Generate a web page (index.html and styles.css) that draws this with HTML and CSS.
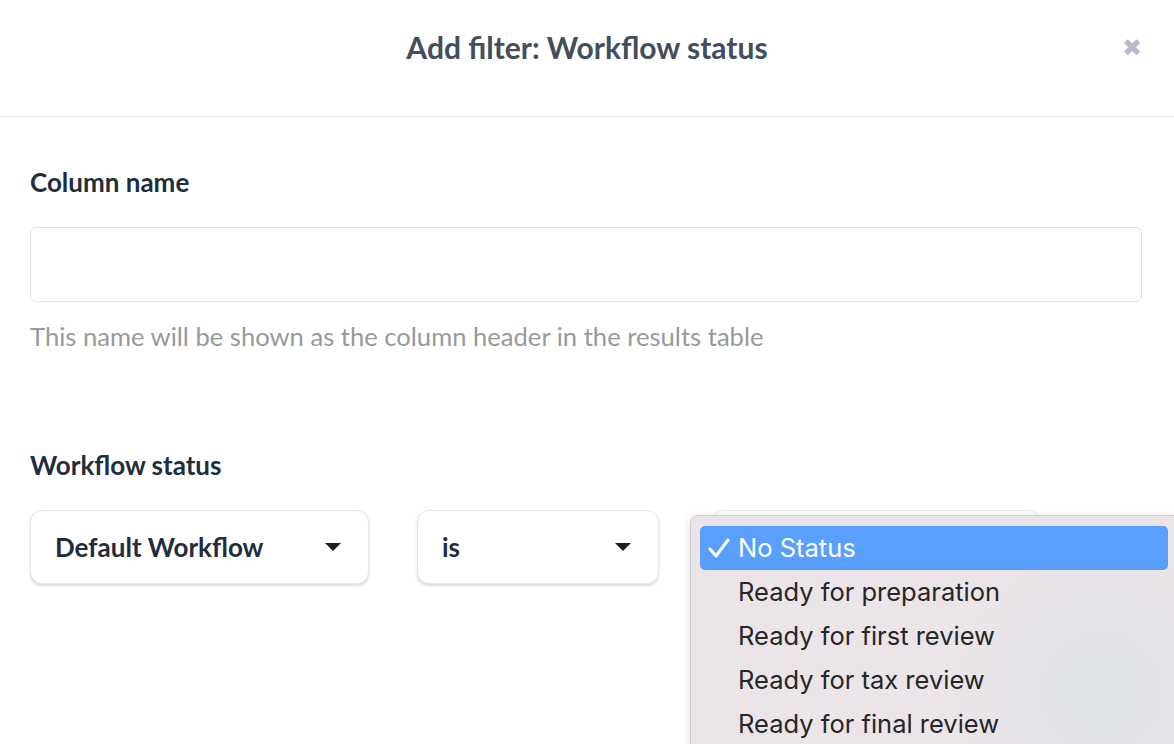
FILE: index.html
```html
<html>
    <head>
        <meta charset="UTF-8">
        <link rel="stylesheet" href="styles.css">
    </head>
    <body>
        <div class="modal">
            <div class="modal-header">
                <h1>Add filter: Workflow status</h1>
                <span class="close">&#x2716;</span>
            </div>
            <div class="modal-body">
                <div class="field">
                    <label for="colname">Column name</label>
                    <input type="text" id="colname" />
                    <p class="help">This name will be shown as the column header in the results table</p>
                </div>
                <div class="field">
                    <label>Workflow status</label>
                    <div class="selects">
                        <div class="select select-workflow">
                            <span>Default Workflow</span>
                            <span class="caret"></span>
                        </div>
                        <div class="select select-op">
                            <span>is</span>
                            <span class="caret"></span>
                        </div>
                        <div class="select-wrap">
                            <div class="select select-status">
                                <span class="caret"></span>
                            </div>
                            <ul class="menu">
                                <li class="selected">
                                    <svg class="check" width="22" height="20" viewBox="0 0 22 20"><path d="M2 11 L8 18 L20 2" fill="none" stroke="#fff" stroke-width="3" stroke-linecap="round" stroke-linejoin="round"/></svg>No Status
                                </li>
                                <li>Ready for preparation</li>
                                <li>Ready for first review</li>
                                <li>Ready for tax review</li>
                                <li>Ready for final review</li>
                            </ul>
                        </div>
                    </div>
                </div>
            </div>
        </div>
    </body>
</html>
```

FILE: styles.css
```css
html, body {
    margin: 0;
    padding: 0;
    background: #fff;
    overflow: hidden;
}

body {
    font-family: Lato, "Liberation Sans", sans-serif;
    color: #212d3d;
}

.modal-header {
    height: 117px;
    border-bottom: 1px solid #ececec;
    display: flex;
    align-items: center;
    justify-content: center;
    position: relative;
    box-sizing: border-box;
    padding-bottom: 22px;
}

.modal-header h1 {
    margin: 0;
    font-size: 30px;
    line-height: 36px;
    font-weight: 700;
    color: #434e5c;
}

.close {
    position: absolute;
    right: 32px;
    top: 33px;
    font-size: 24px;
    line-height: 28px;
    color: #b3bbc6;
}

.modal-body {
    padding: 50px 32px 0 30px;
}

.field {
    margin-bottom: 99px;
}

.field label {
    display: block;
    font-size: 26px;
    line-height: 30px;
    font-weight: 700;
    margin-bottom: 30px;
}

.field input {
    display: block;
    width: 100%;
    height: 75px;
    box-sizing: border-box;
    border: 1px solid #e3e3e3;
    border-radius: 6px;
    font-size: 26px;
    padding: 0 20px;
}

.help {
    margin: 19px 0 0;
    font-size: 25.6px;
    line-height: 30px;
    color: #999;
}

.selects {
    display: flex;
    gap: 48px;
}

.select {
    height: 74px;
    box-sizing: border-box;
    border: 1px solid #e6e6e6;
    border-radius: 12px;
    box-shadow: 0 2px 3px rgba(0, 0, 0, 0.14);
    display: flex;
    align-items: center;
    justify-content: space-between;
    padding: 0 27px 0 24px;
    font-size: 26px;
    font-weight: 700;
    background: #fff;
}

.select-workflow {
    width: 339px;
}

.select-op {
    width: 242px;
}

.caret {
    width: 0;
    height: 0;
    border-left: 8px solid transparent;
    border-right: 8px solid transparent;
    border-top: 8px solid #1e1e1e;
}

.select-wrap {
    position: relative;
    margin-left: 3px;
}

.select-status {
    width: 328px;
    margin-left: 2px;
    justify-content: flex-end;
}

.menu {
    position: absolute;
    left: -20px;
    top: 5px;
    width: 520px;
    height: 260px;
    margin: 0;
    padding: 10px 0 0 9px;
    box-sizing: border-box;
    list-style: none;
    background: radial-gradient(circle at 410px 175px, #dde2e5 0, #e2e2e7 60px, #ebe5e9 140px);
    border: 1px solid #d2ccd0;
    border-radius: 8px;
    box-shadow: -2px 0 6px rgba(0, 0, 0, 0.08);
    font-family: Inter, "Noto Sans", sans-serif;
    font-size: 25.5px;
    color: #262626;
}

.menu li {
    height: 44px;
    line-height: 44px;
    padding-left: 38px;
    width: 468px;
    box-sizing: border-box;
}

.menu li.selected {
    display: flex;
    align-items: center;
    background: #589ffe;
    color: #fff;
    border-radius: 5px;
    padding-left: 8px;
}

.check {
    margin-right: 8px;
}
```
